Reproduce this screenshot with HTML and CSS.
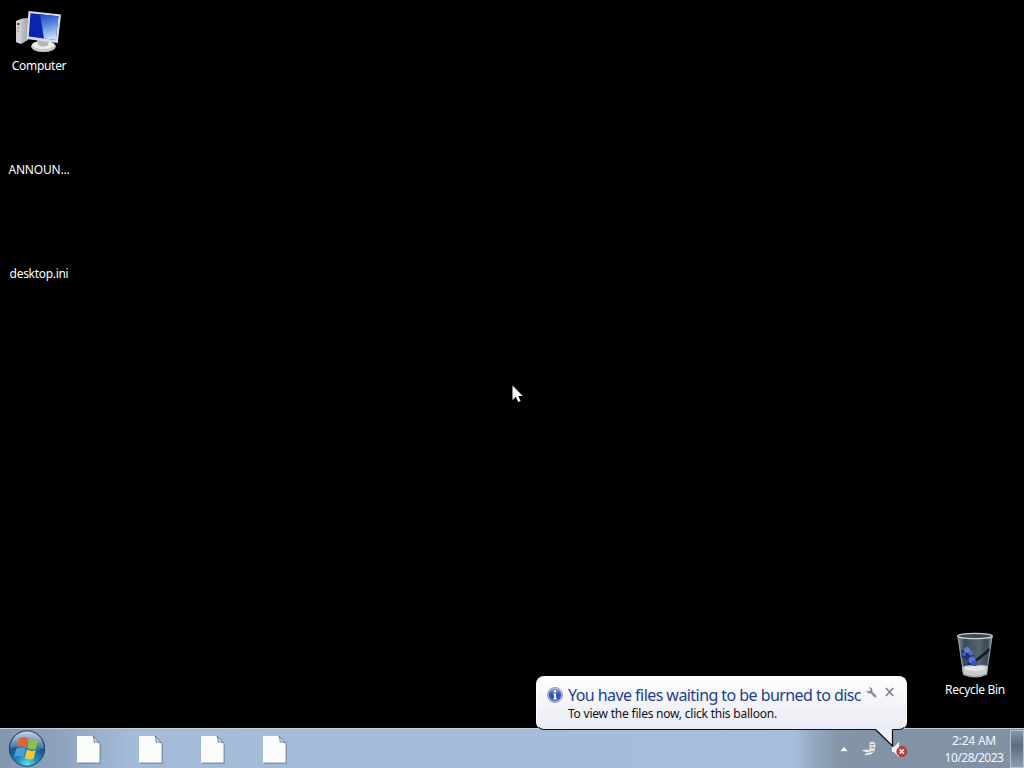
FILE: index.html
```html
<!DOCTYPE html>
<html lang="en">
<head>
    <meta charset="UTF-8">
    <meta name="viewport" content="width=device-width, initial-scale=1.0">
    <title>Desktop</title>
    <link rel="stylesheet" href="styles.css">
</head>
<body>
    <div class="desktop">
        <div class="icon-column">
            <div class="desktop-icon">
                <svg class="icon-image" width="48" height="48" viewBox="0 0 48 48">
                    <defs>
                        <linearGradient id="screen-shine" x1="0" y1="0" x2="0.2" y2="1">
                            <stop offset="0" stop-color="#1a42cc"/>
                            <stop offset="0.5" stop-color="#5f8ae4"/>
                            <stop offset="1" stop-color="#c2dcf8"/>
                        </linearGradient>
                        <linearGradient id="case" x1="0" y1="0" x2="1" y2="0">
                            <stop offset="0" stop-color="#e2e2e2"/>
                            <stop offset="1" stop-color="#a2a2a2"/>
                        </linearGradient>
                    </defs>
                    <path d="M1 13 L7 10.500 L13 10 L13 32 L6 36 L1 34 Z" fill="url(#case)"/>
                    <path d="M1 13 L5.500 14 L5.500 35.500 L1 34 Z" fill="#d2d2d2"/>
                    <path d="M2 20h2.500M2 23h2.500" stroke="#999" stroke-width="1"/>
                    <circle cx="3.300" cy="16" r="1.200" fill="#444"/>
                    <ellipse cx="28.500" cy="38.300" rx="12.300" ry="5.800" fill="#c9c9c9"/>
                    <ellipse cx="28" cy="37" rx="11" ry="4" fill="#eeeeee"/>
                    <path d="M22 30 L34 32 L33 37.500 Q28 40 23 37 Z" fill="#b9b9b9"/>
                    <path d="M13.500 3 L46 6.500 L42.800 35 L11.500 31 Z" fill="#d9dde3"/>
                    <path d="M15.500 5.200 L43.500 8.200 L40.800 32 L13.700 28.500 Z" fill="#0a25ad"/>
                    <path d="M25 6.200 L43.500 8.200 L40.800 32 L29 30.500 Z" fill="url(#screen-shine)"/>
                </svg>
                <span class="icon-label label-computer">Computer</span>
            </div>
            <div class="desktop-icon">
                <span class="icon-image"></span>
                <span class="icon-label label-announ">ANNOUN...</span>
            </div>
            <div class="desktop-icon">
                <span class="icon-image"></span>
                <span class="icon-label label-ini">desktop.ini</span>
            </div>
        </div>

        <div class="desktop-icon recycle-bin">
            <svg class="icon-image" width="48" height="48" viewBox="0 0 48 48">
                <defs>
                    <linearGradient id="glass" x1="0" y1="0" x2="1" y2="0">
                        <stop offset="0" stop-color="#8794a0"/>
                        <stop offset="0.2" stop-color="#394956"/>
                        <stop offset="0.6" stop-color="#56646f"/>
                        <stop offset="0.85" stop-color="#3b4853"/>
                        <stop offset="1" stop-color="#8c98a2"/>
                    </linearGradient>
                </defs>
                <path d="M6.500 4 L41.500 4 L36 42 Q24 48 12 42 Z" fill="url(#glass)"/>
                <path d="M22 30 Q28 27 39 17" fill="none" stroke="#121a22" stroke-width="2.500"/>
                <path d="M10 19 L15 17 L18 22 L23 20 L22 26 L26 29 L24 36 L16 35 L17 28 L11 26 Z" fill="#202e70"/>
                <circle cx="16" cy="18" r="3" fill="#5f7ed8"/>
                <circle cx="20" cy="21" r="2.500" fill="#4c6cc8"/>
                <circle cx="13" cy="22" r="2" fill="#4260b8"/>
                <circle cx="21" cy="28" r="3.500" fill="#5474e0"/>
                <circle cx="23" cy="31" r="2.500" fill="#3c55c0"/>
                <path d="M11 35 Q17 32 24 34 Q31 32 37 34 L36 42 Q24 48 12 42 Z" fill="#c9cbcc"/>
                <ellipse cx="24" cy="36.500" rx="10" ry="2.500" fill="#e4e5e6"/>
                <path d="M12 42 Q24 47.500 36 42" fill="none" stroke="#a5a8aa" stroke-width="1.500"/>
                <path d="M7 5 L12.500 41M41 5 L35.500 41" stroke="#a9b4bd" stroke-width="1" opacity="0.7"/>
                <ellipse cx="24" cy="4" rx="17.300" ry="2.600" fill="#3a4853" stroke="#c7d0d6" stroke-width="1.300"/>
            </svg>
            <span class="icon-label label-bin">Recycle Bin</span>
        </div>

        <svg class="cursor" width="12" height="19" viewBox="0 0 12 19">
            <path d="M0.500 0.500 V15 L3.800 11.800 L6.200 17 L8.600 16 L6.300 11 H10.800 Z" fill="#fff"/>
        </svg>
    </div>

    <div class="taskbar">
        <div class="start-button">
            <svg width="38" height="38" viewBox="0 0 38 38">
                <defs>
                    <radialGradient id="orb" cx="0.5" cy="0.95" r="0.9">
                        <stop offset="0" stop-color="#5fe0f2"/>
                        <stop offset="0.3" stop-color="#2493bd"/>
                        <stop offset="0.65" stop-color="#17548a"/>
                        <stop offset="1" stop-color="#6d8ba8"/>
                    </radialGradient>
                    <linearGradient id="orb-gloss" x1="0" y1="0" x2="0" y2="1">
                        <stop offset="0" stop-color="#dfeaf4" stop-opacity="0.75"/>
                        <stop offset="1" stop-color="#8fb0cc" stop-opacity="0.25"/>
                    </linearGradient>
                </defs>
                <circle cx="19" cy="18.500" r="17.700" fill="url(#orb)" stroke="#24405f" stroke-width="1"/>
                <path d="M2.500 18 A16.500 16.500 0 0 1 35.500 18 Q27 22 19 19 Q11 16 2.500 18 Z" fill="url(#orb-gloss)"/>
                <path d="M11.500 8.500 Q15.500 6 20.200 8.500 L18 17.500 Q13.500 15 8.700 17 Z" fill="#e5622b"/>
                <path d="M21.300 9 Q25.500 11.500 30.200 9.500 L28 18.500 Q23.500 20.500 19.300 18 Z" fill="#8dc04a"/>
                <path d="M8.300 18.500 Q13.500 16.500 17.700 19 L15.600 27.500 Q11 25 6.200 27 Z" fill="#4a9edb"/>
                <path d="M19 19.500 Q23.500 22 27.700 20 L25.500 28.700 Q21.200 30.500 16.900 28 Z" fill="#fbc83a"/>
            </svg>
        </div>
        <div class="pinned">
            <svg class="file-icon" width="26" height="30" viewBox="0 0 26 30">
                <path d="M2 2 H18 L25 9 V29 H2 Z" fill="#6f8196" opacity="0.6"/>
                <path d="M1 1 H17 L23.500 8 V27.500 H1 Z" fill="#fbfcfc"/>
                <path d="M17 1 Q18.500 4 18 7 Q21 6.500 23.500 8 Z" fill="#dfe8ee" stroke="#647888" stroke-width="0.900"/>
            </svg>
            <svg class="file-icon" width="26" height="30" viewBox="0 0 26 30">
                <path d="M2 2 H18 L25 9 V29 H2 Z" fill="#6f8196" opacity="0.6"/>
                <path d="M1 1 H17 L23.500 8 V27.500 H1 Z" fill="#fbfcfc"/>
                <path d="M17 1 Q18.500 4 18 7 Q21 6.500 23.500 8 Z" fill="#dfe8ee" stroke="#647888" stroke-width="0.900"/>
            </svg>
            <svg class="file-icon" width="26" height="30" viewBox="0 0 26 30">
                <path d="M2 2 H18 L25 9 V29 H2 Z" fill="#6f8196" opacity="0.6"/>
                <path d="M1 1 H17 L23.500 8 V27.500 H1 Z" fill="#fbfcfc"/>
                <path d="M17 1 Q18.500 4 18 7 Q21 6.500 23.500 8 Z" fill="#dfe8ee" stroke="#647888" stroke-width="0.900"/>
            </svg>
            <svg class="file-icon" width="26" height="30" viewBox="0 0 26 30">
                <path d="M2 2 H18 L25 9 V29 H2 Z" fill="#6f8196" opacity="0.6"/>
                <path d="M1 1 H17 L23.500 8 V27.500 H1 Z" fill="#fbfcfc"/>
                <path d="M17 1 Q18.500 4 18 7 Q21 6.500 23.500 8 Z" fill="#dfe8ee" stroke="#647888" stroke-width="0.900"/>
            </svg>
        </div>
        <div class="tray">
            <svg width="10" height="6" viewBox="0 0 10 6">
                <path d="M0.600 5.500 L5 0.600 L9.400 5.500 Z" fill="#fff" stroke="#5f7185" stroke-width="0.500"/>
            </svg>
            <svg class="tray-disc" width="18" height="16" viewBox="0 0 18 16">
                <path d="M9.500 1.500 Q12 0 15 1.500 L15.500 5 L14 11 L9.500 10 Z" fill="#dde0dd"/>
                <path d="M10.500 3.500 H14 M11 6.500 H14" stroke="#87918f" stroke-width="0.900"/>
                <path d="M1.500 9.500 L6 8.500 L9 9 L11 8 L15 9.500 L11 13.500 L4 14.200 L7 11.500 Z" fill="#e9ebe8"/>
                <path d="M6.500 12 L10 11 L14 10" fill="none" stroke="#7d858a" stroke-width="0.800"/>
            </svg>
            <svg class="tray-volume" width="18" height="18" viewBox="0 0 18 18">
                <path d="M1 6 H3 L8 1 V16 L3 11 H1 Z" fill="#f3f5f7"/>
                <circle cx="10.800" cy="10.500" r="5" fill="#d33a3a" stroke="#a82226" stroke-width="0.700"/>
                <path d="M8.800 8.500 L12.800 12.500 M12.800 8.500 L8.800 12.500" stroke="#fff" stroke-width="1.700"/>
            </svg>
            <div class="clock">
                <span class="clock-time">2:24 AM</span>
                <span class="clock-date">10/28/2023</span>
            </div>
            <div class="show-desktop"></div>
        </div>
    </div>

    <div class="balloon">
        <svg class="info-icon" width="16" height="16" viewBox="0 0 16 16">
            <defs>
                <linearGradient id="info" x1="0" y1="0" x2="0" y2="1">
                    <stop offset="0" stop-color="#7c94dc"/>
                    <stop offset="0.5" stop-color="#2f4fb8"/>
                    <stop offset="1" stop-color="#4168d0"/>
                </linearGradient>
            </defs>
            <circle cx="8" cy="8" r="7.500" fill="#c5cad6" stroke="#8188a0" stroke-width="0.800"/>
            <circle cx="8" cy="8" r="6.200" fill="url(#info)"/>
            <circle cx="8" cy="4.300" r="1.300" fill="#fff"/>
            <path d="M6.200 6.500 H9 V11.200 H10 V12.400 H6.200 V11.200 H7.100 V7.600 H6.200 Z" fill="#fff"/>
        </svg>
        <div class="balloon-text">
            <div class="balloon-title">You have files waiting to be burned to disc</div>
            <div class="balloon-body">To view the files now, click this balloon.</div>
        </div>
        <div class="balloon-tools">
            <svg width="11" height="11" viewBox="0 0 11 11">
                <path d="M4.500 4.500 L9.300 9.300" stroke="#8b8b8b" stroke-width="2.400" stroke-linecap="round"/>
                <path d="M3 0.400 Q6 0 6.500 3 Q6.500 6 3.800 6.500 Q0.800 6.500 0.400 3.400 L2.600 4.500 L4.200 3.800 L4.600 2.300 Z" fill="#8b8b8b"/>
            </svg>
            <svg width="9" height="10" viewBox="0 0 9 10">
                <path d="M0.800 1 L8.200 9 M8.200 1 L0.800 9" stroke="#858585" stroke-width="1.800"/>
            </svg>
        </div>
        <svg class="balloon-tail" width="22" height="19" viewBox="0 0 22 19">
            <path d="M1 0 L2 1.500 L18.500 18 V0 Z" fill="#eeeff7"/>
            <path d="M1.500 1.500 L18.500 18 V1.500" fill="none" stroke="#0b0d14" stroke-width="1.200"/>
        </svg>
    </div>
</body>
</html>
```
FILE: styles.css
```css
body {
    font-family: "Noto Sans", "Open Sans", sans-serif;
    font-size: 12px;
    margin: 0;
    background-color: #000;
    color: #fff;
    height: 768px;
    width: 1024px;
    display: flex;
    flex-direction: column;
    overflow: hidden;
    position: relative;
}
.desktop {
    flex-grow: 1;
    background-color: #000;
}
.icon-column {
    display: flex;
    flex-direction: column;
    width: 78px;
    padding-top: 8px;
}
.desktop-icon {
    display: flex;
    flex-direction: column;
    align-items: center;
    width: 78px;
    height: 104px;
}
.icon-image {
    display: block;
    width: 48px;
    height: 48px;
    flex-shrink: 0;
}
.icon-label {
    line-height: 16px;
    margin-top: 2px;
    white-space: nowrap;
}
.label-computer {
    letter-spacing: -0.3px;
}
.label-announ {
    letter-spacing: -0.2px;
}
.label-ini {
    letter-spacing: -0.3px;
}
.label-bin {
    letter-spacing: -0.3px;
}
.recycle-bin {
    position: absolute;
    left: 936px;
    top: 632px;
    height: 68px;
}
.cursor {
    position: absolute;
    left: 512px;
    top: 385px;
}

.taskbar {
    display: flex;
    align-items: center;
    height: 40px;
    box-sizing: border-box;
    border-top: 1px solid #c3ced9;
    background: linear-gradient(to right, #8296b0 0, #8ea3be 60px, #a4bbd8 130px, #a5bedb 795px, #94a7bd 815px, #8394a8 840px, #8191a4 1024px);
}
.start-button {
    width: 54px;
    height: 38px;
    display: flex;
    justify-content: center;
}
.pinned {
    display: flex;
    gap: 36px;
    padding-left: 22px;
    margin-top: 2px;
}
.tray {
    display: flex;
    align-items: center;
    margin-left: auto;
    height: 100%;
}
.tray-disc {
    margin-left: 11px;
}
.tray-volume {
    margin-left: 13px;
    margin-top: 3px;
}
.clock {
    display: flex;
    flex-direction: column;
    align-items: center;
    width: 72px;
    margin-left: 29px;
    line-height: 17px;
    color: #f6f9fc;
    white-space: nowrap;
}
.clock-time {
    letter-spacing: -0.2px;
}
.clock-date {
    letter-spacing: -0.5px;
}
.show-desktop {
    width: 14px;
    height: 38px;
    box-sizing: border-box;
    border: 1px solid #b5c2cf;
    background: linear-gradient(to bottom, #8795a4 0%, #5d6d7e 40%, #8b9dae 100%);
}

.balloon {
    position: absolute;
    left: 536px;
    top: 676px;
    width: 371px;
    height: 54px;
    box-sizing: border-box;
    display: flex;
    padding: 10px 12px 0 10px;
    border: 1px solid #fff;
    border-bottom-color: #10131c;
    border-radius: 8px;
    background: linear-gradient(to bottom, #ffffff, #e9eaf4);
}
.info-icon {
    flex-shrink: 0;
}
.balloon-text {
    margin-left: 5px;
    margin-top: -3px;
    white-space: nowrap;
    width: 294px;
}
.balloon-title {
    font-size: 16px;
    line-height: 22px;
    letter-spacing: -0.56px;
    color: #22408f;
}
.balloon-body {
    line-height: 16px;
    letter-spacing: -0.22px;
    color: #111;
}
.balloon-tools {
    display: flex;
    gap: 8px;
    margin-left: 4px;
}
.balloon-tail {
    position: absolute;
    left: 337px;
    top: 51px;
}
```
